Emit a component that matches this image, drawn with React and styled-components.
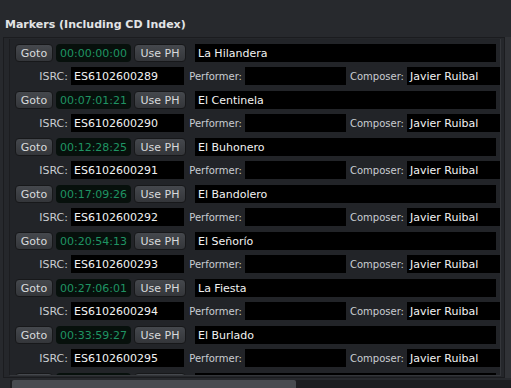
import React from "react";
import styled, { createGlobalStyle } from "styled-components";

const GlobalStyle = createGlobalStyle`
  html, body {
    margin: 0;
    padding: 0;
    background: #27292d;
    overflow: hidden;
  }
  body {
    font-family: "DejaVu Sans", "Liberation Sans", sans-serif;
  }
`;

const markers = [
  { time: "00:00:00:00", name: "La Hilandera", isrc: "ES6102600289" },
  { time: "00:07:01:21", name: "El Centinela", isrc: "ES6102600290" },
  { time: "00:12:28:25", name: "El Buhonero", isrc: "ES6102600291" },
  { time: "00:17:09:26", name: "El Bandolero", isrc: "ES6102600292" },
  { time: "00:20:54:13", name: "El Señorío", isrc: "ES6102600293" },
  { time: "00:27:06:01", name: "La Fiesta", isrc: "ES6102600294" },
  { time: "00:33:59:27", name: "El Burlado", isrc: "ES6102600295" },
];

const Page = styled.div`
  width: 511px;
  height: 388px;
  display: flex;
  flex-direction: column;
  background: #27292d;
`;

const Title = styled.div`
  height: 37px;
  padding: 18px 0 0 5px;
  box-sizing: border-box;
  font-size: 11px;
  line-height: 13px;
  font-weight: bold;
  color: #e2e4e6;
`;

const Body = styled.div`
  display: flex;
  height: 341px;
`;

const Frame = styled.div`
  flex: 1;
  margin-left: 3px;
  border: 1px solid #1b1c1f;
  border-right: none;
  background: #25272b;
  padding: 1px 3px 1px 5px;
  display: flex;
`;

const Viewport = styled.div`
  flex: 1;
  overflow: hidden;
  background: #222428;
  border-left: 1px solid #1c1d20;
  border-right: 1px solid #34363a;
  border-bottom: 1px solid #34363a;
  padding: 5px 0 0 5px;
  display: flex;
  flex-direction: column;
  gap: 6px;
`;

const VScroll = styled.div`
  width: 6px;
  background: #303236;
  border-left: 1px solid #1b1c1f;
`;

const HScroll = styled.div`
  height: 8px;
  margin: 2px 0 0 10px;
  background: #1d1e21;
  display: flex;
`;

const HThumb = styled.div`
  width: 284px;
  margin-left: 2px;
  background: #484b50;
  border-radius: 2px 2px 0 0;
`;

const Block = styled.div`
  display: flex;
  flex-direction: column;
  gap: 5px;
  flex-shrink: 0;
`;

const Line = styled.div`
  display: flex;
  align-items: center;
  height: 18px;
`;

const Button = styled.div`
  box-sizing: border-box;
  flex-shrink: 0;
  width: ${({ w }) => w}px;
  height: 18px;
  margin-right: ${({ mr }) => mr || 3}px;
  border: 1px solid #17181a;
  border-radius: 4px;
  background: linear-gradient(#45484d, #34363a);
  color: #d8dadc;
  font-size: 11px;
  display: flex;
  align-items: center;
  justify-content: center;
`;

const Clock = styled.div`
  box-sizing: border-box;
  flex-shrink: 0;
  width: 75px;
  height: 18px;
  margin-right: 3px;
  border-radius: 4px;
  background: #07100c;
  color: #1f9463;
  font-size: 11px;
  display: flex;
  align-items: center;
  justify-content: center;
`;

const Field = styled.div`
  box-sizing: border-box;
  flex-shrink: 0;
  width: ${({ w }) => w}px;
  height: 18px;
  background: #000;
  color: #f2f2f2;
  font-size: 11px;
  padding-left: 3px;
  display: flex;
  align-items: center;
  white-space: nowrap;
  overflow: hidden;
`;

const Label = styled.div`
  flex-shrink: 0;
  width: ${({ w }) => w}px;
  text-align: right;
  padding-right: 3px;
  box-sizing: border-box;
  color: #c9cdd2;
  font-size: ${({ small }) => (small ? 10 : 11)}px;
  white-space: nowrap;
`;

const Spacer = styled.div`
  width: ${({ w }) => w}px;
  flex-shrink: 0;
`;

const Marker = ({ time, name, isrc, clipped }) => (
  <Block>
    <Line>
      <Button w={38}>{!clipped && "Goto"}</Button>
      <Clock>{!clipped && time}</Clock>
      <Button w={52} mr={9}>{!clipped && "Use PH"}</Button>
      <Field w={301}>{!clipped && name}</Field>
    </Line>
    {!clipped && (
      <Line>
        <Label w={56}>ISRC:</Label>
        <Field w={113}>{isrc}</Field>
        <Spacer w={4} />
        <Label w={57} small>Performer:</Label>
        <Field w={101} />
        <Label w={61} small>Composer:</Label>
        <Field w={93}>Javier Ruibal</Field>
      </Line>
    )}
  </Block>
);

export default function App() {
  return (
    <>
      <GlobalStyle />
      <Page>
        <Title>Markers (Including CD Index)</Title>
        <Body>
          <Frame>
            <Viewport>
              {markers.map((m) => (
                <Marker key={m.time} {...m} />
              ))}
              <Marker clipped />
            </Viewport>
          </Frame>
          <VScroll />
        </Body>
        <HScroll>
          <HThumb />
        </HScroll>
      </Page>
    </>
  );
}
